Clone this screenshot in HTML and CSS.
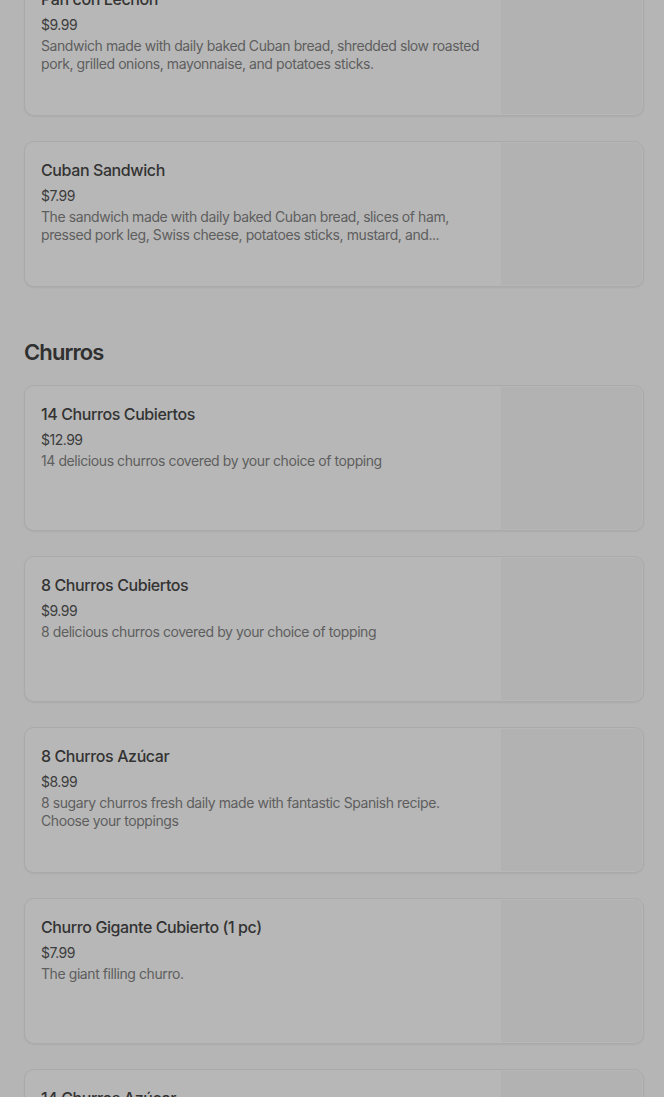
FILE: index.html
```html
<!DOCTYPE html>
<html lang="en">
<head>
<meta charset="utf-8">
<title>Menu</title>
<link rel="stylesheet" href="styles.css">
</head>
<body>
<main class="menu">
  <section class="section">
    <div class="items">
      <article class="item">
        <div class="info">
          <h3 class="name">Pan con Lechón</h3>
          <p class="price">$9.99</p>
          <p class="desc">Sandwich made with daily baked Cuban bread, shredded slow roasted pork, grilled onions, mayonnaise, and potatoes sticks.</p>
        </div>
        <div class="thumb"></div>
      </article>
      <article class="item">
        <div class="info">
          <h3 class="name">Cuban Sandwich</h3>
          <p class="price">$7.99</p>
          <p class="desc">The sandwich made with daily baked Cuban bread, slices of ham, pressed pork leg, Swiss cheese, potatoes sticks, mustard, and...</p>
        </div>
        <div class="thumb"></div>
      </article>
    </div>
  </section>
  <section class="section">
    <h2 class="section-title">Churros</h2>
    <div class="items">
      <article class="item">
        <div class="info">
          <h3 class="name">14 Churros Cubiertos</h3>
          <p class="price">$12.99</p>
          <p class="desc">14 delicious churros covered by your choice of topping</p>
        </div>
        <div class="thumb"></div>
      </article>
      <article class="item">
        <div class="info">
          <h3 class="name">8 Churros Cubiertos</h3>
          <p class="price">$9.99</p>
          <p class="desc">8 delicious churros covered by your choice of topping</p>
        </div>
        <div class="thumb"></div>
      </article>
      <article class="item">
        <div class="info">
          <h3 class="name">8 Churros Azúcar</h3>
          <p class="price">$8.99</p>
          <p class="desc">8 sugary churros fresh daily made with fantastic Spanish recipe. Choose your toppings</p>
        </div>
        <div class="thumb"></div>
      </article>
      <article class="item">
        <div class="info">
          <h3 class="name">Churro Gigante Cubierto (1 pc)</h3>
          <p class="price">$7.99</p>
          <p class="desc">The giant filling churro.</p>
        </div>
        <div class="thumb"></div>
      </article>
      <article class="item">
        <div class="info">
          <h3 class="name">14 Churros Azúcar</h3>
          <p class="price">$10.99</p>
          <p class="desc">14 sugary churros fresh daily made with fantastic Spanish recipe.</p>
        </div>
        <div class="thumb"></div>
      </article>
    </div>
  </section>
</main>
</body>
</html>
```
FILE: styles.css
```css
html, body {
  margin: 0;
  padding: 0;
  background: #b5b5b5;
  font-family: Inter, Roboto, "Liberation Sans", sans-serif;
  overflow: hidden;
}

.menu {
  margin-top: -30px;
  padding: 0 20px 0 24px;
}

.section + .section {
  margin-top: 49px;
}

.section-title {
  margin: 0 0 17px;
  font-size: 22px;
  line-height: 32px;
  font-weight: 600;
  letter-spacing: -0.9px;
  color: #303030;
}

.items {
  display: flex;
  flex-direction: column;
  gap: 25px;
}

.item {
  display: flex;
  height: 146px;
  box-sizing: border-box;
  border: 1px solid #aaaaaa;
  border-radius: 10px;
  background: #b7b7b7;
  box-shadow: 0 1px 2px rgba(0, 0, 0, 0.06);
  overflow: hidden;
  padding: 1px;
}

.info {
  flex: 1;
  min-width: 0;
  padding: 15px 16px 0 15px;
}

.name {
  margin: 0;
  font-size: 16px;
  line-height: 24px;
  font-weight: 500;
  letter-spacing: -0.4px;
  color: #333333;
}

.price {
  margin: 4px 0 0;
  font-size: 14px;
  line-height: 20px;
  color: #3c3c3c;
  letter-spacing: -0.5px;
}

.desc {
  margin: 2px 0 0;
  font-size: 14px;
  line-height: 18px;
  color: #5e5e5e;
  letter-spacing: -0.42px;
  display: -webkit-box;
  -webkit-line-clamp: 2;
  -webkit-box-orient: vertical;
  overflow: hidden;
}

.thumb {
  width: 141px;
  flex: none;
  background: #b2b2b2;
  border-radius: 0 8px 8px 0;
}
```
